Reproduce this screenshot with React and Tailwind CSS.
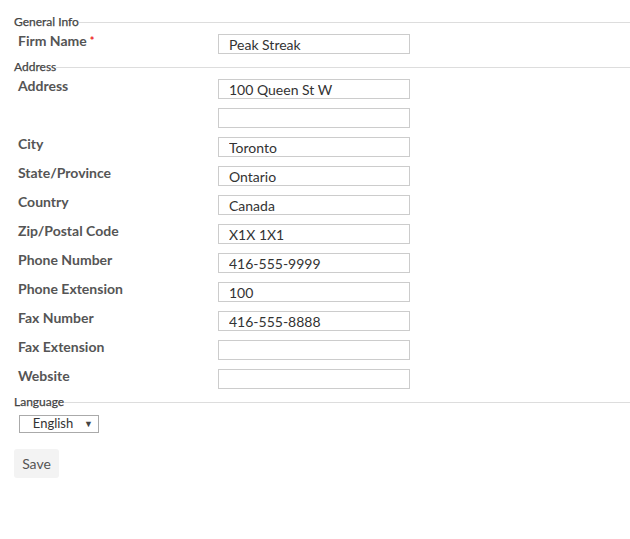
import React from "react";

const ADDRESS_ROWS = [
  { label: "City", value: "Toronto" },
  { label: "State/Province", value: "Ontario" },
  { label: "Country", value: "Canada" },
  { label: "Zip/Postal Code", value: "X1X 1X1" },
  { label: "Phone Number", value: "416-555-9999" },
  { label: "Phone Extension", value: "100" },
  { label: "Fax Number", value: "416-555-8888" },
  { label: "Fax Extension", value: "" },
  { label: "Website", value: "" },
];

function Legend({ children }) {
  return (
    <div className="flex items-center h-[14px] mb-[2px]">
      <span className="text-[12px] leading-[14px] text-[#444] [-webkit-text-stroke:0.25px_#444]">{children}</span>
      <div className="flex-1 border-t border-[#ddd]" />
    </div>
  );
}

function TextBox({ value }) {
  return (
    <input
      type="text"
      defaultValue={value}
      className="mt-[3px] w-[192px] h-[20px] border border-[#ccc] pl-[10px] text-[14px] text-[#333] outline-none"
    />
  );
}

function Row({ label, required, value }) {
  return (
    <div className="flex h-[29px]">
      <div className="w-[204px] pl-[4px] h-5 text-[14px] leading-5 font-bold text-[#555]">
        {label}
        {required && <span className="text-[#e22] text-[11px] align-top ml-[3px]">*</span>}
      </div>
      <TextBox value={value} />
    </div>
  );
}

export default function App() {
  return (
    <div className="pl-[14px] pt-[15px] bg-white min-h-[539px]" style={{ fontFamily: "Lato, 'Open Sans', sans-serif" }}>
      <Legend>General Info</Legend>
      <Row label="Firm Name" required value="Peak Streak" />

      <Legend>Address</Legend>
      <Row label="Address" value="100 Queen St W" />
      <div className="flex h-[29px]">
        <div className="w-[204px]" />
        <TextBox value="" />
      </div>
      {ADDRESS_ROWS.map((r) => (
        <Row key={r.label} label={r.label} value={r.value} />
      ))}

      <Legend>Language</Legend>
      <div className="ml-[5px] mt-[6px] w-[80px] h-[18px] border border-[#aaa] flex items-center text-[13px] text-[#333]">
        <span className="flex-1 text-center pl-[2px]">English</span>
        <span className="text-[9px] pr-[5px] text-[#444]">▼</span>
      </div>

      <button className="mt-[16px] w-[45px] h-[29px] bg-[#f3f3f3] rounded-[3px] text-[14px] text-[#555]">
        Save
      </button>
    </div>
  );
}
